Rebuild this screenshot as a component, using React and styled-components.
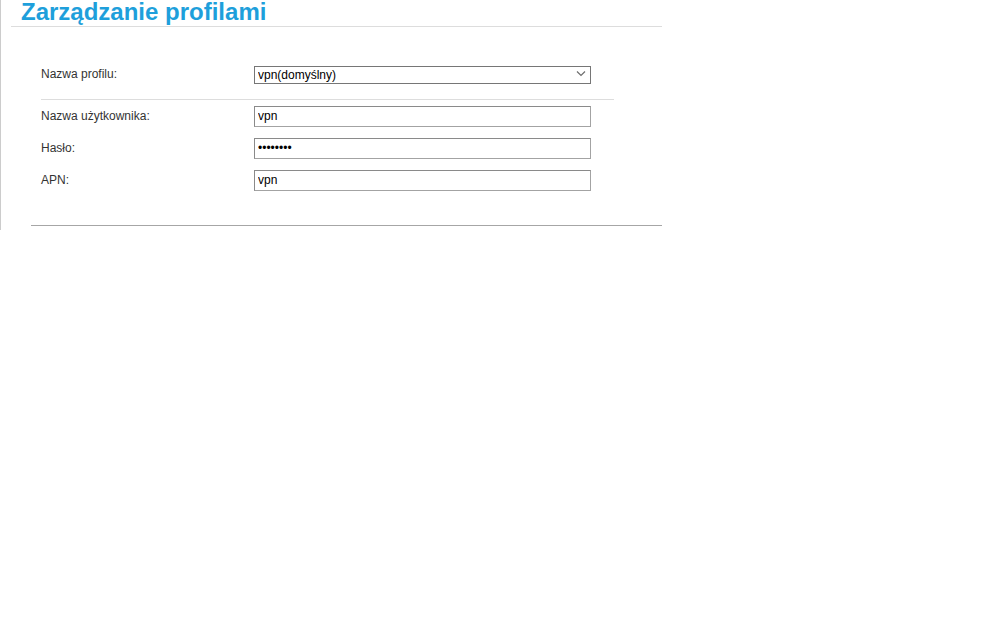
import styled, { createGlobalStyle } from 'styled-components';

const Global = createGlobalStyle`
  html, body {
    margin: 0;
    padding: 0;
    background: #ffffff;
    font-family: "Liberation Sans", Arial, sans-serif;
  }
`

// box with the grey rule on the left
const Panel = styled.div`
  width: 651px;
  padding: 0 0 4px 10px;
  border-left: 1px solid #cccccc;
`

const Title = styled.h1`
  margin: 0;
  padding: 0 0 2px 10px;
  height: 24px;
  line-height: 24px;
  font-size: 24px;
  font-weight: bold;
  color: #1e9fdb;
  border-bottom: 1px solid #dddddd;
  white-space: nowrap;
`

const Form = styled.div`
  margin-top: 31px;
  padding-left: 20px;
`

const Row = styled.div`
  display: flex;
  align-items: center;
  height: 32px;
  padding-left: 10px;
`

const Label = styled.label`
  width: 213px;
  flex-shrink: 0;
  font-size: 12px;
  color: #333333;
`

const SelectWrap = styled.div`
  position: relative;
  width: 337px;
  height: 18px;
`

const Select = styled.select`
  appearance: none;
  box-sizing: border-box;
  width: 100%;
  height: 18px;
  margin: 0;
  padding: 0 0 0 3px;
  border: 1px solid #767676;
  border-radius: 0;
  background: #ffffff;
  font-family: "Liberation Sans", Arial, sans-serif;
  font-size: 12px;
  color: #000000;
  outline: none;
`

const Chevron = styled.svg`
  position: absolute;
  right: 5px;
  top: 5px;
  pointer-events: none;
`

const Input = styled.input`
  box-sizing: border-box;
  width: 337px;
  height: 21px;
  margin: 0;
  padding: 0 0 0 3px;
  border: 1px solid #a3a3a3;
  border-top-color: #8a8a8a;
  border-left-color: #8a8a8a;
  font-family: "Liberation Sans", Arial, sans-serif;
  font-size: 12px;
  color: #000000;
  outline: none;
`

const Divider = styled.div`
  margin: 9px 0 0 10px;
  width: 573px;
  height: 1px;
  background: #dddddd;
`

const Footer = styled.div`
  margin-top: 29px;
  height: 1px;
  background: #a6a6a6;
`

function Field({ label, type, value }) {
  return (
    <Row>
      <Label>{label}</Label>
      <Input type={type} defaultValue={value} />
    </Row>
  )
}

export default function App() {
  return (
    <>
      <Global />
      <Panel>
        <Title>Zarządzanie profilami</Title>
        <Form>
          <Row>
            <Label>Nazwa profilu:</Label>
            <SelectWrap>
              <Select defaultValue="vpn">
                <option value="vpn">vpn(domyślny)</option>
              </Select>
              <Chevron width="10" height="7" viewBox="0 0 10 7">
                <path d="M1 1.5 L5 5.5 L9 1.5" fill="none" stroke="#6e6e6e" strokeWidth="1.2" />
              </Chevron>
            </SelectWrap>
          </Row>
          <Divider />
          <Field label="Nazwa użytkownika:" type="text" value="vpn" />
          <Field label="Hasło:" type="password" value="vpnvpnvp" />
          <Field label="APN:" type="text" value="vpn" />
          <Footer />
        </Form>
      </Panel>
    </>
  )
}
